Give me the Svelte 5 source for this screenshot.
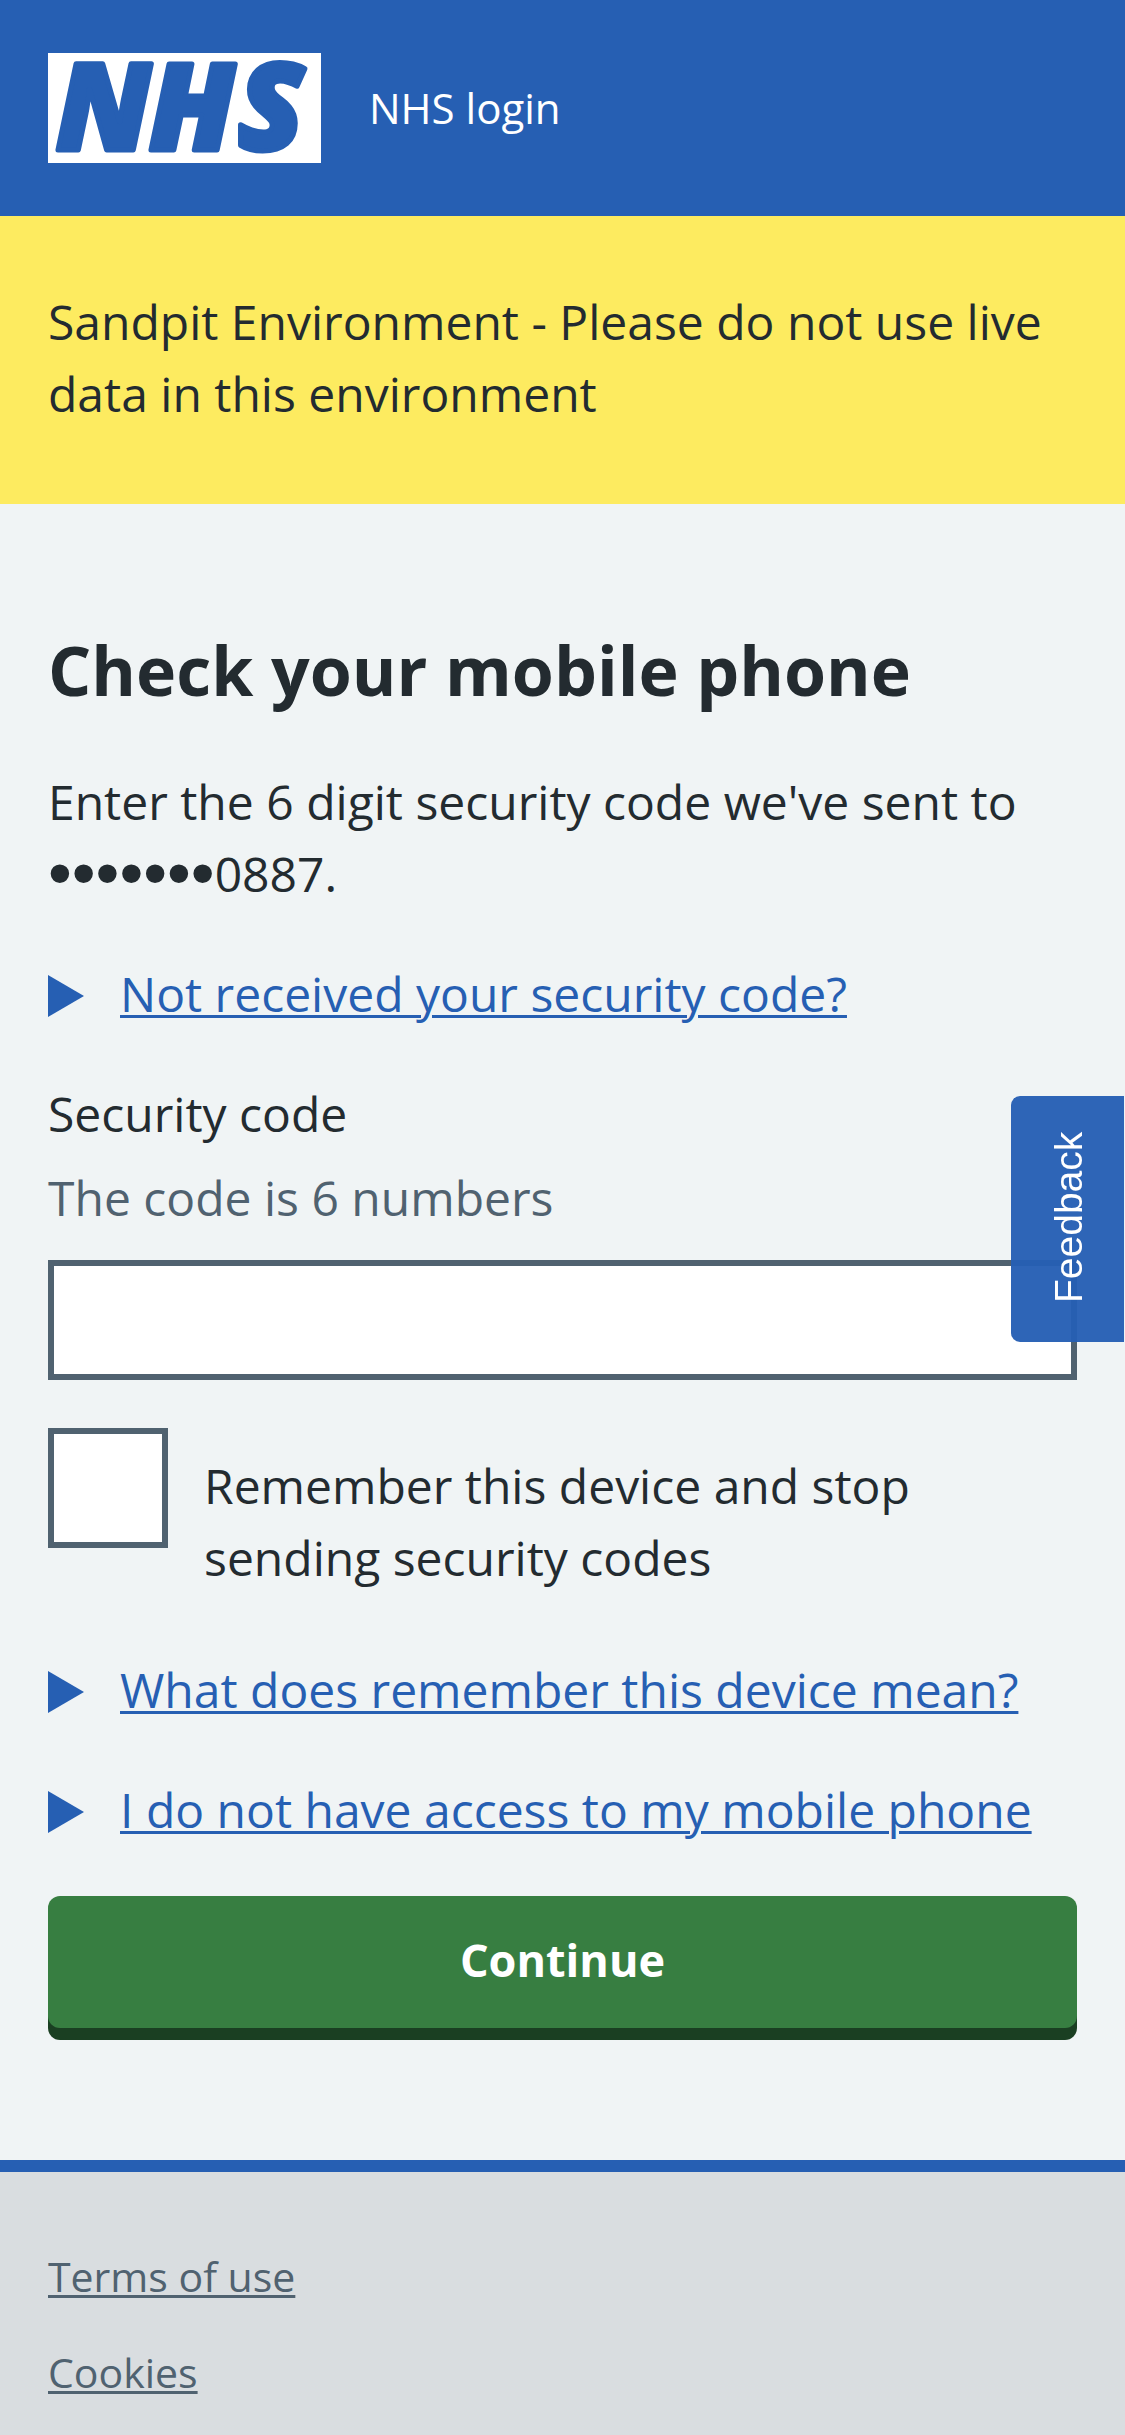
<script>
  let code = $state('');
  let remember = $state(false);
  let opened = $state({ resend: false, remember: false, access: false });
</script>

{#snippet expander(key, title, body)}
  <details bind:open={opened[key]}>
    <summary>
      <svg class="arrow" viewBox="0 0 36 42" aria-hidden="true"><path d="M0 0L36 21L0 42Z" /></svg>
      <span>{title}</span>
    </summary>
    {#if opened[key]}
      <p>{body}</p>
    {/if}
  </details>
{/snippet}

<div class="page">
  <header>
    <a class="logo" href="/" aria-label="NHS login home">
      <svg viewBox="0 0 273 110" role="img" aria-label="NHS">
        <rect width="273" height="110" />
        <text x="8 101 190" y="97">NHS</text>
      </svg>
    </a>
    <a class="service" href="/">NHS login</a>
  </header>

  <div class="banner">
    <p>Sandpit Environment - Please do not use live data in this environment</p>
  </div>

  <main>
    <h1>Check your mobile phone</h1>
    <p class="intro">Enter the 6 digit security code we've sent to <span class="mask">•••••••</span>0887.</p>

    {@render expander('resend', 'Not received your security code?', 'It can take a few minutes for the code to arrive.')}

    <form onsubmit={(event) => event.preventDefault()}>
      <div class="field">
        <label for="code">Security code</label>
        <span class="hint" id="code-hint">The code is 6 numbers</span>
        <input id="code" type="text" inputmode="numeric" aria-describedby="code-hint" bind:value={code} />
      </div>

      <div class="remember">
        <input id="remember" type="checkbox" bind:checked={remember} />
        <label for="remember">Remember this device and stop sending security codes</label>
      </div>

      <div class="help">
        {@render expander('remember', 'What does remember this device mean?', 'You will not need a security code when you next log in on this device.')}
        {@render expander('access', 'I do not have access to my mobile phone', 'You can change the mobile phone number for your account.')}
      </div>

      <button class="continue" type="submit">Continue</button>
    </form>
  </main>

  <footer>
    <ul>
      <li><a href="/terms">Terms of use</a></li>
      <li><a href="/cookies">Cookies</a></li>
    </ul>
  </footer>

  <button class="feedback" type="button">Feedback</button>
</div>

<style>
  :global(body) {
    margin: 0;
    background: #d9dde0;
  }

  .page {
    display: flex;
    flex-direction: column;
    min-height: 100vh;
    color: #232b30;
    font-family: 'Open Sans', 'Noto Sans', sans-serif;
    font-size: 48px;
    font-weight: 500;
    line-height: 72px;
  }

  .page :is(p, h1, ul) {
    margin: 0;
  }

  header {
    display: flex;
    align-items: center;
    gap: 48px;
    padding: 53px 48px;
    background: #265fb3;
  }

  .logo svg {
    display: block;
    width: 273px;
    height: 110px;
    overflow: visible;
  }

  .logo rect {
    fill: #fff;
  }

  .logo text {
    fill: #265fb3;
    stroke: #265fb3;
    stroke-width: 5px;
    stroke-linejoin: round;
    font-size: 120px;
    font-style: italic;
    font-weight: 800;
  }

  .service {
    color: #fff;
    font-size: 42px;
    line-height: 64px;
    text-decoration: none;
  }

  .banner {
    padding: 70px 48px 74px;
    background: #fdeb60;
  }

  main {
    padding: 118px 48px 120px;
    background: #f0f4f5;
  }

  h1 {
    padding-bottom: 48px;
    font-size: 68px;
    font-weight: 700;
    line-height: 96px;
  }

  .intro {
    padding-bottom: 48px;
  }

  .mask {
    font-family: 'Liberation Sans', sans-serif;
    font-size: 68px;
    line-height: 24px;
    vertical-align: -4px;
  }

  summary {
    display: flex;
    align-items: center;
    gap: 36px;
    width: fit-content;
    color: #265fb3;
    cursor: pointer;
    list-style: none;
  }

  summary span {
    text-decoration: underline;
    text-decoration-thickness: 3px;
    text-underline-offset: 3px;
  }

  details p {
    padding: 24px 0 0 72px;
  }

  .arrow {
    flex: none;
    width: 36px;
    height: 42px;
    margin-top: 4px;
    fill: #265fb3;
  }

  form {
    padding-top: 48px;
  }

  .field {
    display: flex;
    flex-direction: column;
  }

  .hint {
    padding: 12px 0 26px;
    color: #506270;
  }

  input {
    box-sizing: border-box;
    margin: 0;
    border: 6px solid #506270;
    border-radius: 0;
    background: #fff;
    font: inherit;
  }

  .field input {
    width: 100%;
    height: 120px;
    padding: 12px;
  }

  .remember {
    display: flex;
    align-items: flex-start;
    gap: 36px;
    padding-top: 48px;
  }

  .remember input {
    flex: none;
    width: 120px;
    height: 120px;
    appearance: none;
  }

  .remember input:checked {
    background: #506270;
    box-shadow: inset 0 0 0 18px #fff;
  }

  .remember label {
    max-width: 780px;
    padding-top: 22px;
  }

  .help {
    display: grid;
    gap: 48px;
    padding: 60px 0 50px;
  }

  .continue {
    display: block;
    width: 100%;
    margin-bottom: 12px;
    padding: 28px 48px 32px;
    border: 0;
    border-radius: 12px;
    background: #377e41;
    box-shadow: 0 12px 0 #1a3f22;
    color: #fff;
    font: inherit;
    font-size: 45px;
    font-weight: 700;
    cursor: pointer;
  }

  footer {
    flex: 1;
    padding: 72px 48px 24px;
    border-top: 12px solid #265fb3;
    background: #d9dde0;
    font-size: 41px;
    line-height: 64px;
  }

  ul {
    display: grid;
    gap: 32px;
    padding: 0;
    list-style: none;
  }

  footer a {
    color: #506270;
    text-decoration-thickness: 3px;
    text-underline-offset: 3px;
  }

  .feedback {
    position: fixed;
    top: 45%;
    right: 1px;
    width: 113px;
    height: 246px;
    padding: 4px 4px 0 0;
    border: 0;
    border-radius: 0 9px 9px 0;
    background: #255fb4f5;
    color: #fff;
    font-family: 'Liberation Sans', sans-serif;
    font-size: 39px;
    line-height: 48px;
    writing-mode: vertical-rl;
    transform: rotate(180deg);
    cursor: pointer;
  }
</style>
